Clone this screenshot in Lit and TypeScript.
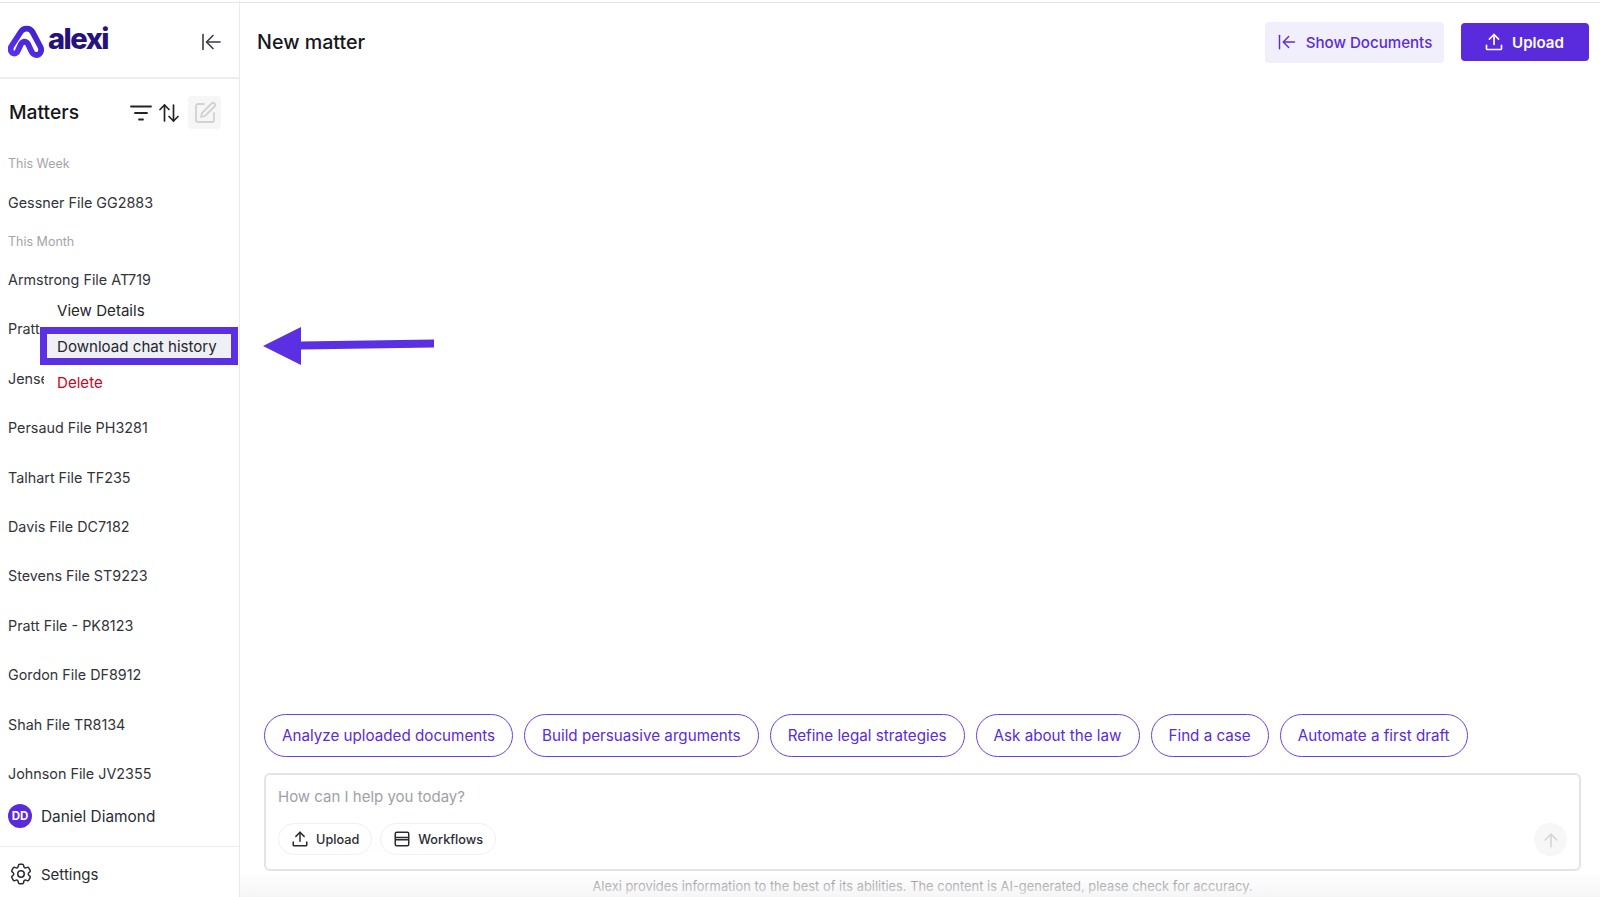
import { LitElement, html, css } from "lit";
import { customElement } from "lit/decorators.js";

const uploadIcon = html`<svg viewBox="0 0 24 24" fill="none" stroke="currentColor" stroke-width="2" stroke-linecap="round" stroke-linejoin="round"><path d="M12 15V3"/><path d="M6.5 8.5 12 3l5.500 5.500"/><path d="M3 16v4a1 1 0 0 0 1 1h16a1 1 0 0 0 1-1v-4"/></svg>`;
const collapseIcon = html`<svg viewBox="0 0 24 24" fill="none" stroke="currentColor" stroke-width="1.700" stroke-linecap="round" stroke-linejoin="round"><path d="M3 4v16"/><path d="M21 12H8"/><path d="M14 5.500 7.500 12l6.500 6.500"/></svg>`;

const group2 = [
  { name: "Armstrong File AT719", cut: "" },
  { name: "Pratt File PK2341", cut: "cut-a" },
  { name: "Jensen File JN1182", cut: "cut-b" },
  { name: "Persaud File PH3281", cut: "" },
  { name: "Talhart File TF235", cut: "" },
  { name: "Davis File DC7182", cut: "" },
  { name: "Stevens File ST9223", cut: "" },
  { name: "Pratt File - PK8123", cut: "" },
  { name: "Gordon File DF8912", cut: "" },
  { name: "Shah File TR8134", cut: "" },
  { name: "Johnson File JV2355", cut: "" },
];
const chips = ["Analyze uploaded documents", "Build persuasive arguments", "Refine legal strategies", "Ask about the law", "Find a case", "Automate a first draft"];

@customElement("app-root")
export class AppRoot extends LitElement {
  static styles = css`
    :host { display: block; width: 1600px; height: 897px; overflow: hidden; position: relative; background: #fff; color: #1b1b22; font-family: Inter, "Noto Sans", sans-serif; }
    * { box-sizing: border-box; }
    .page { display: flex; height: 897px; border-top: 1px solid #fff; position: relative; }
    .topline { position: absolute; left: 0; right: 0; top: 2px; height: 1px; background: #e6e6ea; z-index: 1; }
    .side { width: 240px; flex: none; height: 100%; border-right: 1px solid #e8e8ee; display: flex; flex-direction: column; padding-top: 2px; position: relative; }
    .brand { height: 76px; flex: none; display: flex; align-items: center; justify-content: space-between; padding: 4px 16px 0 8px; border-bottom: 2px solid #ececf1; }
    .logo { display: flex; align-items: center; gap: 2px; margin-top: -2px; }
    .logo svg { width: 37px; height: 35px; display: block; }
    .logo span { font-size: 29px; font-weight: 800; letter-spacing: -1.500px; color: #25127d; line-height: 30px; margin-top: -5px; margin-left: 1px; }
    .collapse { width: 24px; height: 24px; color: #3a3a42; display: block; }
    .mhead { display: flex; align-items: center; padding: 15px 18px 0 9px; height: 52px; flex: none; }
    .mhead h2 { margin: -2px 0 0; flex: 1; font-size: 19.300px; font-weight: 500; color: #15151c; }
    .mhead .ico { display: block; color: #23232b; }
    .sort { margin-left: 3.500px; }
    .edit { width: 33px; height: 33px; background: #f6f6f7; border-radius: 4px; display: flex; align-items: center; justify-content: center; color: #d2d2d4; margin-left: 7.500px; }
    .edit svg { display: block; }
    .list { flex: 1; overflow: hidden; display: flex; flex-direction: column; padding-top: 24px; }
    .label { height: 37.500px; flex: none; padding-left: 8px; font-size: 12.500px; line-height: 16px; color: #a4a4a8; padding-top: 1px; }
    .row { height: 49.400px; flex: none; padding-left: 8px; font-size: 14.350px; line-height: 20px; color: #33333a; white-space: nowrap; overflow: hidden; }
    .row.first { height: 40px; }
    .row.cut-a { width: 41px; }
    .row.cut-b { width: 44px; }
    .user { display: flex; align-items: center; gap: 9px; padding: 0 8px; height: 30px; flex: none; font-size: 15.400px; color: #2c2c33; margin-bottom: 15px; }
    .avatar { width: 24px; height: 24px; border-radius: 50%; background: #5a2bdc; color: #fff; font-size: 11.500px; font-weight: 700; display: flex; align-items: center; justify-content: center; }
    .settings { height: 51px; flex: none; border-top: 1px solid #ebebf3; display: flex; align-items: center; gap: 7px; padding: 4px 8px 0 8px; font-size: 15px; color: #2c2c33; }
    .settings svg { width: 26px; height: 26px; display: block; }
    .menu { position: absolute; left: 40px; top: 292px; width: 198px; display: flex; flex-direction: column; }
    .menu div { display: flex; align-items: center; font-size: 15.100px; white-space: nowrap; }
    .menu .view { color: #26262d; margin-left: 4px; padding: 1px 0 0 13px; background: #fff; width: 194px; height: 34px; }
    .menu .dl { height: 38px; border: 7px solid #5b2fe3; background: #eff0f4; padding-left: 10px; color: #26262d; }
    .menu .del { color: #d6001c; margin-left: 4px; padding: 1px 0 0 13px; background: #fff; width: 194px; height: 33px; }
    .arrow { position: absolute; left: 262px; top: 326px; width: 174px; height: 40px; display: block; z-index: 2; }
    .main { flex: 1; min-width: 0; display: flex; flex-direction: column; padding: 2px 11px 0 17px; position: relative; }
    .top { display: flex; align-items: center; height: 76px; flex: none; padding-top: 2px; }
    .top h1 { margin: 0; flex: 1; font-size: 19.700px; font-weight: 500; color: #17171e; }
    .btn { display: flex; align-items: center; justify-content: center; border-radius: 4px; font-size: 15.100px; font-weight: 500; white-space: nowrap; }
    .btn svg { width: 20px; height: 20px; display: block; }
    .show { width: 179px; height: 41px; background: #f1effc; color: #5a2bdc; gap: 9px; }
    .up { width: 128px; height: 38px; background: #5a2bdc; color: #fff; gap: 8px; margin-left: 17px; font-weight: 600; padding-right: 2px; }
    .spacer { flex: 1; }
    .work { padding: 0 8px 0 7px; flex: none; }
    .chips { display: flex; gap: 11px; margin-bottom: 16px; }
    .chip { height: 43px; display: flex; align-items: center; padding: 0 17px; border: 1px solid #6a40e4; border-radius: 22px; color: #5a2bdc; font-size: 15.200px; white-space: nowrap; }
    .box { height: 98px; border: 2px solid #e4e4e6; border-radius: 6px; padding: 12px 11px 0 12px; position: relative; }
    .ph { font-size: 15px; line-height: 20px; color: #a0a0a8; }
    .tools { display: flex; gap: 8px; margin-top: 16px; }
    .tool { height: 32px; display: flex; align-items: center; gap: 7px; padding: 0 12px; border: 1px solid #f0effa; border-radius: 16px; font-size: 12.700px; font-weight: 500; color: #2a2a31; white-space: nowrap; }
    .tool svg { width: 18px; height: 18px; display: block; }
    .send { position: absolute; right: 12px; bottom: 13px; width: 33px; height: 33px; border-radius: 50%; background: #f7f7f7; color: #d3d3d5; display: flex; align-items: center; justify-content: center; }
    .send svg { width: 20px; height: 20px; display: block; }
    .note { text-align: center; font-size: 12.900px; line-height: 18px; color: #85858b; margin-top: 7px; height: 19px; white-space: nowrap; }
    .fade { position: absolute; left: 240px; right: 0; bottom: 0; height: 24px; background: linear-gradient(to bottom, rgba(245,245,245,0), rgba(243,243,243,0.800)); pointer-events: none; }
  `;

  render() {
    return html`
      <div class="topline"></div>
      <div class="page">
        <aside class="side">
          <div class="brand">
            <div class="logo">
              <svg viewBox="0 0 37 35" fill="none">
                <defs><linearGradient id="g" x1="0" y1="1" x2="1" y2="0"><stop offset="0" stop-color="#5b30f0"/><stop offset="1" stop-color="#3f22c4"/></linearGradient></defs>
                <path d="M6.500 29.500 C3 29.500 1.500 25.500 3.500 22 L13 7.500 C15.500 3.500 22 3.500 24.500 8 L32.500 23 C34.500 27.500 31.500 31 28.500 31 C26 31 24.500 29.500 23.500 27.500 L20 20 C18 17 15 17 13 20 L10 26.500 C9.200 28.500 8.500 29.500 6.500 29.500 Z" stroke="url(#g)" stroke-width="5.800" stroke-linejoin="round"/>
              </svg>
              <span>alexi</span>
            </div>
            <svg class="collapse" viewBox="0 0 24 24" fill="none" stroke="currentColor" stroke-width="1.600" stroke-linecap="round" stroke-linejoin="round"><path d="M4 4.500v15"/><path d="M21 12H8"/><path d="M14 5.500 7.500 12l6.500 6.500"/></svg>
          </div>
          <div class="mhead">
            <h2>Matters</h2>
            <svg class="ico" width="24" height="24" viewBox="0 0 24 24" fill="none" stroke="currentColor" stroke-width="1.800" stroke-linecap="round"><path d="M2 5.500h20"/><path d="M6 12h12"/><path d="M10 18.500h4"/></svg>
            <svg class="ico sort" width="24" height="24" viewBox="0 0 24 24" fill="none" stroke="currentColor" stroke-width="1.700" stroke-linecap="round" stroke-linejoin="round"><path d="M7.500 20V4"/><path d="M3 8.500 7.500 4 12 8.500"/><path d="M16.500 4v16"/><path d="M12 15.500l4.500 4.500 4.500-4.500"/></svg>
            <div class="edit"><svg width="24" height="24" viewBox="0 0 24 24" fill="none" stroke="currentColor" stroke-width="1.800" stroke-linecap="round" stroke-linejoin="round"><path d="M11 3H5a2 2 0 0 0-2 2v14a2 2 0 0 0 2 2h14a2 2 0 0 0 2-2v-7"/><path d="M18.500 2.500a2.100 2.100 0 0 1 3 3L12 15l-4 1 1-4z"/></svg></div>
          </div>
          <div class="list">
            <div class="label">This Week</div>
            <div class="row first">Gessner File GG2883</div>
            <div class="label">This Month</div>
            ${group2.map((r) => html`<div class="row ${r.cut}">${r.name}</div>`)}
          </div>
          <div class="user"><div class="avatar">DD</div>Daniel Diamond</div>
          <div class="settings">
            <svg viewBox="0 0 24 24" fill="none" stroke="currentColor" stroke-width="1.400" stroke-linecap="round" stroke-linejoin="round"><path d="M9.594 3.940c.090-.542.560-.940 1.110-.940h2.593c.550 0 1.020.398 1.110.940l.213 1.281c.063.374.313.686.645.870.074.040.147.083.220.127.325.196.720.257 1.075.124l1.217-.456a1.125 1.125 0 0 1 1.370.490l1.296 2.247a1.125 1.125 0 0 1-.260 1.431l-1.003.827c-.293.241-.438.613-.430.992a7.723 7.723 0 0 1 0 .255c-.008.378.137.750.430.991l1.004.827c.424.350.534.955.260 1.430l-1.298 2.247a1.125 1.125 0 0 1-1.369.491l-1.217-.456c-.355-.133-.750-.072-1.076.124a6.470 6.470 0 0 1-.220.128c-.331.183-.581.495-.644.869l-.213 1.281c-.090.543-.560.940-1.110.940h-2.594c-.550 0-1.019-.398-1.110-.940l-.213-1.281c-.062-.374-.312-.686-.644-.870a6.520 6.520 0 0 1-.220-.127c-.325-.196-.720-.257-1.076-.124l-1.217.456a1.125 1.125 0 0 1-1.369-.490l-1.297-2.247a1.125 1.125 0 0 1 .260-1.431l1.004-.827c.292-.240.437-.613.430-.991a6.932 6.932 0 0 1 0-.255c.007-.380-.138-.751-.430-.992l-1.004-.827a1.125 1.125 0 0 1-.260-1.430l1.297-2.247a1.125 1.125 0 0 1 1.370-.491l1.216.456c.356.133.751.072 1.076-.124.072-.044.146-.086.220-.128.332-.183.582-.495.644-.869l.214-1.280Z"/><circle cx="12" cy="12" r="3"/></svg>
            Settings
          </div>
          <div class="menu">
            <div class="view">View Details</div>
            <div class="dl">Download chat history</div>
            <div class="del">Delete</div>
          </div>
        </aside>
        <main class="main">
          <div class="top">
            <h1>New matter</h1>
            <div class="btn show">${collapseIcon}Show Documents</div>
            <div class="btn up">${uploadIcon}Upload</div>
          </div>
          <div class="spacer"></div>
          <div class="work">
            <div class="chips">${chips.map((c) => html`<div class="chip">${c}</div>`)}</div>
            <div class="box">
              <div class="ph">How can I help you today?</div>
              <div class="tools">
                <div class="tool">${uploadIcon}Upload</div>
                <div class="tool"><svg viewBox="0 0 24 24" fill="none" stroke="currentColor" stroke-width="2" stroke-linejoin="round"><rect x="3" y="3" width="18" height="18" rx="2"/><path d="M3 10h18M3 13h18"/></svg>Workflows</div>
              </div>
              <div class="send"><svg viewBox="0 0 24 24" fill="none" stroke="currentColor" stroke-width="1.800" stroke-linecap="round" stroke-linejoin="round"><path d="M12 20V5"/><path d="M5 12l7-7 7 7"/></svg></div>
            </div>
            <div class="note">Alexi provides information to the best of its abilities. The content is AI-generated, please check for accuracy.</div>
          </div>
        </main>
      </div>
      <div class="fade"></div>
      <svg class="arrow" viewBox="0 0 174 40"><path d="M1 20 L39 1 V15.500 L172 13.500 V21.500 L39 23.500 V39 Z" fill="#5b2fe3"/></svg>
    `;
  }
}
